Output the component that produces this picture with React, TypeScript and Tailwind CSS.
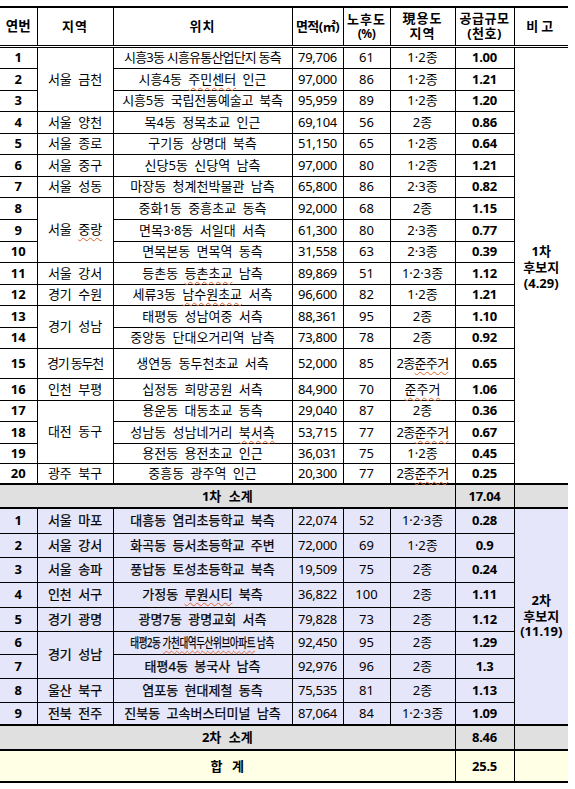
import React from "react";

const U = ({ children }: { children: React.ReactNode }) => (
  <span className="underline decoration-wavy decoration-[#e0652e] decoration-1 underline-offset-[3px] [text-decoration-skip-ink:none]">
    {children}
  </span>
);

const Sq = ({ cls, children }: { cls: string; children: React.ReactNode }) => (
  <div className="flex justify-center">
    <span className={"inline-block shrink-0 " + cls}>{children}</span>
  </div>
);

type Row = {
  n: string;
  region?: React.ReactNode;
  rs?: number;
  regionCls?: string;
  loc: React.ReactNode;
  locCls?: string;
  area: string;
  age: string;
  zone: React.ReactNode;
  zoneCls?: string;
  supply: string;
  h: string;
};

const sec1: Row[] = [
  { n: "1", region: "서울 금천", rs: 3, loc: "시흥3동 시흥유통산업단지 동측", locCls: "tracking-[-0.8px] [word-spacing:0px]", area: "79,706", age: "61", zone: "1·2종", supply: "1.00", h: "h-[22px]" },
  { n: "2", loc: <>시흥4동 <U>주민센터</U> 인근</>, area: "97,000", age: "86", zone: "1·2종", supply: "1.21", h: "h-[22px]" },
  { n: "3", loc: "시흥5동 국립전통예술고 북측", locCls: "tracking-[-0.2px]", area: "95,959", age: "89", zone: "1·2종", supply: "1.20", h: "h-[21px]" },
  { n: "4", region: "서울 양천", loc: "목4동 정목초교 인근", area: "69,104", age: "56", zone: "2종", supply: "0.86", h: "h-[22px]" },
  { n: "5", region: "서울 종로", loc: "구기동 상명대 북측", area: "51,150", age: "65", zone: "1·2종", supply: "0.64", h: "h-[21px]" },
  { n: "6", region: "서울 중구", loc: "신당5동 신당역 남측", area: "97,000", age: "80", zone: "1·2종", supply: "1.21", h: "h-[22px]" },
  { n: "7", region: "서울 성동", loc: "마장동 청계천박물관 남측", area: "65,800", age: "86", zone: "2·3종", supply: "0.82", h: "h-[21px]" },
  { n: "8", region: <>서울 <U>중랑</U></>, rs: 3, loc: "중화1동 중흥초교 동측", area: "92,000", age: "68", zone: "2종", supply: "1.15", h: "h-[22px]" },
  { n: "9", loc: "면목3·8동 서일대 서측", area: "61,300", age: "80", zone: "2·3종", supply: "0.77", h: "h-[22px]" },
  { n: "10", loc: "면목본동 면목역 동측", area: "31,558", age: "63", zone: "2·3종", supply: "0.39", h: "h-[21px]" },
  { n: "11", region: "서울 강서", loc: <>등촌동 <U>등촌초교</U> 남측</>, area: "89,869", age: "51", zone: "1·2·3종", supply: "1.12", h: "h-[22px]" },
  { n: "12", region: "경기 수원", loc: <>세류3동 <U>남수원초교</U> 서측</>, area: "96,600", age: "82", zone: "1·2종", supply: "1.21", h: "h-[21px]" },
  { n: "13", region: "경기 성남", rs: 2, loc: "태평동 성남여중 서측", area: "88,361", age: "95", zone: "2종", supply: "1.10", h: "h-[22px]" },
  { n: "14", loc: "중앙동 단대오거리역 남측", area: "73,800", age: "78", zone: "2종", supply: "0.92", h: "h-[21px]" },
  { n: "15", region: "경기 동두천", regionCls: "tracking-[-1.2px] [word-spacing:0px]", loc: "생연동 동두천초교 서측", area: "52,000", age: "85", zone: <>2종<U>준주거</U></>, zoneCls: "tracking-[-0.7px]", supply: "0.65", h: "h-[30px]" },
  { n: "16", region: "인천 부평", loc: "십정동 희망공원 서측", area: "84,900", age: "70", zone: <U>준주거</U>, supply: "1.06", h: "h-[22px]" },
  { n: "17", region: "대전 동구", rs: 3, loc: "용운동 대동초교 동측", area: "29,040", age: "87", zone: "2종", supply: "0.36", h: "h-[21px]" },
  { n: "18", loc: <>성남동 성남네거리 <U>북서측</U></>, area: "53,715", age: "77", zone: <>2종<U>준주거</U></>, zoneCls: "tracking-[-0.7px]", supply: "0.67", h: "h-[22px]" },
  { n: "19", loc: "용전동 용전초교 인근", area: "36,031", age: "75", zone: "1·2종", supply: "0.45", h: "h-[20px]" },
  { n: "20", region: "광주 북구", loc: "중흥동 광주역 인근", area: "20,300", age: "77", zone: <>2종<U>준주거</U></>, zoneCls: "tracking-[-0.7px]", supply: "0.25", h: "h-[21px]" },
];

const sec2: Row[] = [
  { n: "1", region: "서울 마포", loc: "대흥동 염리초등학교 북측", area: "22,074", age: "52", zone: "1·2·3종", supply: "0.28", h: "h-[25px]" },
  { n: "2", region: "서울 강서", loc: "화곡동 등서초등학교 주변", area: "72,000", age: "69", zone: "1·2종", supply: "0.9", h: "h-[24px]" },
  { n: "3", region: "서울 송파", loc: "풍납동 토성초등학교 북측", area: "19,509", age: "75", zone: "2종", supply: "0.24", h: "h-[25px]" },
  { n: "4", region: "인천 서구", loc: <>가정동 <U>루원시티</U> 북측</>, area: "36,822", age: "100", zone: "2종", supply: "1.11", h: "h-[25px]" },
  { n: "5", region: "경기 광명", loc: "광명7동 광명교회 서측", area: "79,828", age: "73", zone: "2종", supply: "1.12", h: "h-[24px]" },
  {
    n: "6",
    region: "경기 성남",
    rs: 2,
    loc: (
      <Sq cls="scale-x-[0.74] tracking-[-0.6px] [word-spacing:0px]">
        태평2동 <U>가천대역두산위브아파트</U> 남측
      </Sq>
    ),
    area: "92,450",
    age: "95",
    zone: "2종",
    supply: "1.29",
    h: "h-[23px]",
  },
  { n: "7", loc: "태평4동 봉국사 남측", area: "92,976", age: "96", zone: "2종", supply: "1.3", h: "h-[24px]" },
  { n: "8", region: "울산 북구", loc: "염포동 현대제철 동측", area: "75,535", age: "81", zone: "2종", supply: "1.13", h: "h-[24px]" },
  { n: "9", region: "전북 전주", loc: "진북동 고속버스터미널 남측", area: "87,064", age: "84", zone: "1·2·3종", supply: "1.09", h: "h-[23px]" },
];

const td = "border border-black p-0 text-center align-middle whitespace-nowrap";
const first = td + " border-l-0 font-bold";
const last = td + " border-r-0";

function Body({ rows, note, noteCls, sec2Style }: { rows: Row[]; note: React.ReactNode; noteCls: string; sec2Style?: boolean }) {
  const txt = sec2Style ? " [-webkit-text-stroke:0.25px_black]" : "";
  return (
    <>
      {rows.map((r, i) => (
        <tr key={r.n} className={r.h + (sec2Style ? " bg-[#e6e6fa]" : "")}>
          <td className={first}>{r.n}</td>
          {r.region !== undefined && (
            <td rowSpan={r.rs ?? 1} className={td + txt + " " + (r.regionCls ?? "")}>
              {r.region}
            </td>
          )}
          <td className={td + txt + " " + (r.locCls ?? "")}>{r.loc}</td>
          <td className={td + " tracking-[-0.3px]"}>{r.area}</td>
          <td className={td}>{r.age}</td>
          <td className={td + " " + (r.zoneCls ?? "")}>{r.zone}</td>
          <td className={td + " font-bold tracking-[-0.3px]"}>{r.supply}</td>
          {i === 0 && (
            <td rowSpan={rows.length} className={last + " font-bold " + noteCls}>
              {note}
            </td>
          )}
        </tr>
      ))}
    </>
  );
}

export default function App() {
  const th =
    "border border-black border-t-2 border-b-[3px] [border-bottom-style:double] p-0 text-center align-middle font-bold leading-[15px] whitespace-nowrap";
  const sub = "border-y-2 border-black p-0 text-center align-middle font-bold";
  return (
    <div className="w-[575px] h-[789px] bg-white pt-[6px] text-black font-['Noto_Sans','Noto_Sans_CJK_KR',sans-serif]">
      <table className="w-[568px] table-fixed border-collapse text-[13px] leading-none [word-spacing:3px]">
        <colgroup>
          <col className="w-[37px]" />
          <col className="w-[76px]" />
          <col className="w-[179px]" />
          <col className="w-[51px]" />
          <col className="w-[47px]" />
          <col className="w-[65px]" />
          <col className="w-[59px]" />
          <col className="w-[54px]" />
        </colgroup>
        <thead>
          <tr className="h-[39px]">
            <th className={th + " border-l-0 text-[13.5px]"}>연번</th>
            <th className={th + " tracking-[1px]"}>지역</th>
            <th className={th + " tracking-[1px]"}>위치</th>
            <th className={th + " tracking-[-0.5px]"}>면적(㎡)</th>
            <th className={th + " tracking-[1px]"}>
              <div className="leading-[15px]">노후도</div>
              <div className="text-[12px] leading-[14px] tracking-[-0.5px]">(%)</div>
            </th>
            <th className={th + " tracking-[1px]"}>
              <div className="leading-[15px]">現용도</div>
              <div className="leading-[15px]">지역</div>
            </th>
            <th className={th + " tracking-[0.5px]"}>
              <div className="leading-[15px]">공급규모</div>
              <div className="leading-[15px]">(천호)</div>
            </th>
            <th className={th + " border-r-0 tracking-[3px]"}>비고</th>
          </tr>
        </thead>
        <tbody>
          <Body
            rows={sec1}
            noteCls="bg-white leading-[16px]"
            note={
              <div className="pt-[4px]">
                <div>1차</div>
                <div>후보지</div>
                <div>(4.29)</div>
              </div>
            }
          />
          <tr className="h-[24px] bg-[#e0e0e0]">
            <td colSpan={6} className={sub + " border-l-0 [word-spacing:4px]"}>
              1차 소계
            </td>
            <td className={sub + " border-x border-black tracking-[-0.3px]"}>17.04</td>
            <td className={sub + " border-r-0 border-l border-black"}></td>
          </tr>
          <Body
            rows={sec2}
            sec2Style
            noteCls="bg-[#e6e6fa] leading-[15.5px] align-middle"
            note={
              <div>
                <div>2차</div>
                <div>후보지</div>
                <div>(11.19)</div>
              </div>
            }
          />
          <tr className="h-[25px] bg-[#e0e0e0]">
            <td colSpan={6} className={sub + " border-l-0 [word-spacing:4px]"}>
              2차 소계
            </td>
            <td className={sub + " border-x border-black tracking-[-0.3px]"}>8.46</td>
            <td className={sub + " border-r-0 border-l border-black"}></td>
          </tr>
          <tr className="h-[32px] bg-[#ffffe6]">
            <td colSpan={6} className={sub + " border-l-0 [word-spacing:6px]"}>
              합 계
            </td>
            <td className={sub + " border-x border-black tracking-[-0.3px]"}>25.5</td>
            <td className={sub + " border-r-0 border-l border-black"}></td>
          </tr>
        </tbody>
      </table>
    </div>
  );
}
